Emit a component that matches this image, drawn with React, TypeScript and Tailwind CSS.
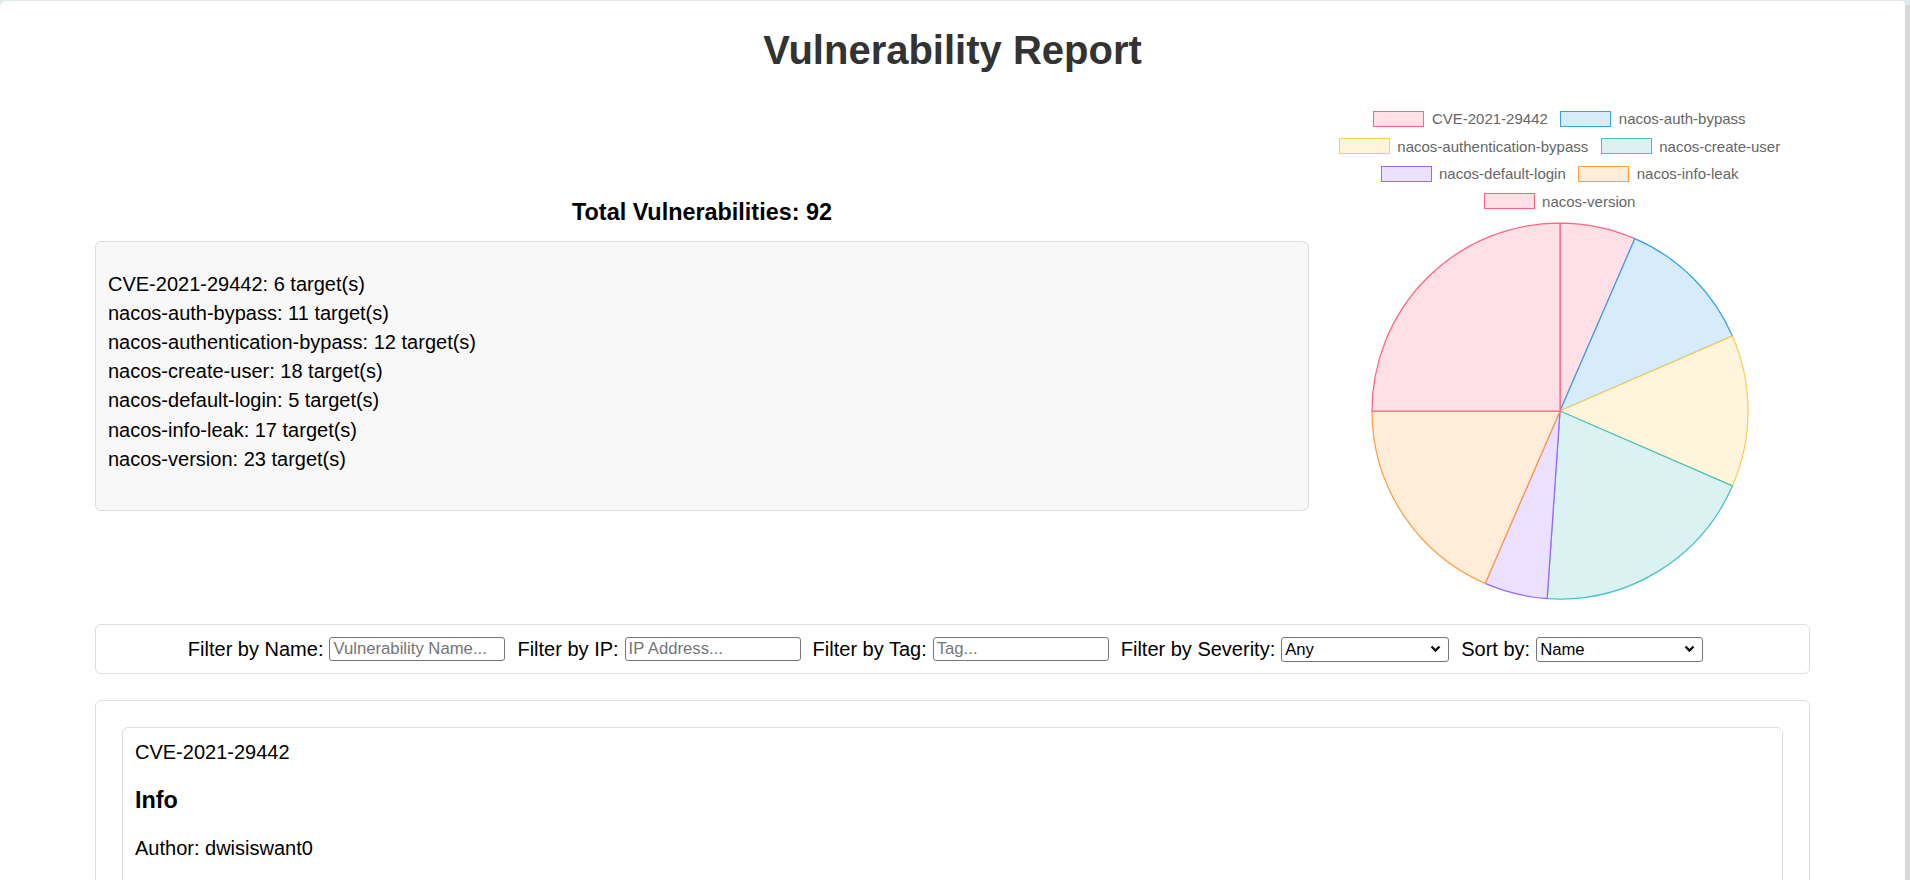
import React from 'react';

const vulns = [
  { name: 'CVE-2021-29442', count: 6, line: '#ff6384', fill: '#ffe0e6', swatch: 'bg-[#ffe0e6] border-[#ff6384]' },
  { name: 'nacos-auth-bypass', count: 11, line: '#36a2eb', fill: '#d7ecfb', swatch: 'bg-[#d7ecfb] border-[#36a2eb]' },
  { name: 'nacos-authentication-bypass', count: 12, line: '#ffce56', fill: '#fff5dd', swatch: 'bg-[#fff5dd] border-[#ffce56]' },
  { name: 'nacos-create-user', count: 18, line: '#4bc0c0', fill: '#dbf2f2', swatch: 'bg-[#dbf2f2] border-[#4bc0c0]' },
  { name: 'nacos-default-login', count: 5, line: '#9966ff', fill: '#ebe0ff', swatch: 'bg-[#ebe0ff] border-[#9966ff]' },
  { name: 'nacos-info-leak', count: 17, line: '#ff9f40', fill: '#ffecd9', swatch: 'bg-[#ffecd9] border-[#ff9f40]' },
  { name: 'nacos-version', count: 23, line: '#ff6384', fill: '#ffe0e6', swatch: 'bg-[#ffe0e6] border-[#ff6384]' },
];

const legendRows = [[0, 1], [2, 3], [4, 5], [6]];

function PieChart() {
  const total = vulns.reduce((s, v) => s + v.count, 0);
  const cx = 190;
  const cy = 190;
  const r = 188;
  let acc = 0;
  const point = (a: number) => {
    const rad = (a / total) * Math.PI * 2;
    return [cx + r * Math.sin(rad), cy - r * Math.cos(rad)];
  };
  return (
    <svg width="380" height="380" viewBox="0 0 380 380">
      {vulns.map((v) => {
        const [x1, y1] = point(acc);
        acc += v.count;
        const [x2, y2] = point(acc);
        const large = v.count / total > 0.5 ? 1 : 0;
        return (
          <path
            key={v.name}
            d={`M${cx} ${cy} L${x1} ${y1} A${r} ${r} 0 ${large} 1 ${x2} ${y2} Z`}
            fill={v.fill}
            stroke={v.line}
            strokeWidth="1.25"
            strokeLinejoin="round"
          />
        );
      })}
    </svg>
  );
}

function Legend() {
  return (
    <div className="flex flex-col">
      {legendRows.map((row, i) => (
        <div key={i} className="h-[27.5px] flex items-center justify-center gap-[12.5px]">
          {row.map((idx) => (
            <div key={idx} className="flex items-center gap-[7.5px]">
              <span className={`w-[51px] h-[16px] border-[1.25px] ${vulns[idx].swatch}`} />
              <span className="text-[15px] text-[#666] leading-none">{vulns[idx].name}</span>
            </div>
          ))}
        </div>
      ))}
    </div>
  );
}

function TextInput({ placeholder }: { placeholder: string }) {
  return (
    <input
      type="text"
      placeholder={placeholder}
      className="w-[176px] h-[24px] border border-[#767676] rounded-[3px] px-[3px] text-[16.7px] bg-white placeholder:text-[#757575] outline-none"
    />
  );
}

function Select({ value, width }: { value: string; width: string }) {
  return (
    <div className={`relative h-[25px] ${width}`}>
      <select className="block appearance-none w-full h-full border border-[#767676] rounded-[3px] pl-[3px] text-[16.7px] leading-[23px] bg-white text-black outline-none">
        <option>{value}</option>
      </select>
      <svg
        className="absolute right-[8px] top-[8px] pointer-events-none"
        width="11"
        height="8"
        viewBox="0 0 11 8"
      >
        <path d="M1.5 1.5l4 4 4-4" stroke="#111" strokeWidth="2.4" fill="none" />
      </svg>
    </div>
  );
}

function FilterGroup({ label, children }: { label: string; children: React.ReactNode }) {
  return (
    <label className="flex items-center gap-[6px] text-[20px] text-black">
      <span>{label}</span>
      {children}
    </label>
  );
}

export default function App() {
  const total = vulns.reduce((s, v) => s + v.count, 0);
  return (
    <div className="h-[880px] overflow-hidden flex bg-[#dfeaed] font-['Liberation_Sans',Arial,sans-serif]">
      <div className="w-[1905px] mt-[1px] bg-white rounded-tl-[6px] rounded-tr-[4px] pt-[26px] px-[95px]">
        <h1 className="text-[40px] leading-[46px] font-bold text-[#333] text-center">Vulnerability Report</h1>

        <div className="mt-[32px] flex items-center">
          <div className="w-[1214px] flex flex-col">
            <h3 className="text-[23.4px] leading-[33px] font-bold text-black text-center mb-[12px]">
              Total Vulnerabilities: {total}
            </h3>
            <div className="h-[270px] bg-[#f8f8f8] border border-[#ddd] rounded-[6px] pl-[12px] pt-[28px]">
              {vulns.map((v) => (
                <div key={v.name} className="text-[20px] leading-[29.2px] text-black">
                  {v.name}: {v.count} target(s)
                </div>
              ))}
            </div>
          </div>
          <div className="flex-1 flex flex-col items-center">
            <Legend />
            <div className="mt-[6px]">
              <PieChart />
            </div>
          </div>
        </div>

        <div className="mt-[23px] h-[50px] border border-[#ddd] rounded-[6px] flex items-center justify-center gap-[12px] pr-[14px]">
          <FilterGroup label="Filter by Name:">
            <TextInput placeholder="Vulnerability Name..." />
          </FilterGroup>
          <FilterGroup label="Filter by IP:">
            <TextInput placeholder="IP Address..." />
          </FilterGroup>
          <FilterGroup label="Filter by Tag:">
            <TextInput placeholder="Tag..." />
          </FilterGroup>
          <FilterGroup label="Filter by Severity:">
            <Select value="Any" width="w-[168px]" />
          </FilterGroup>
          <FilterGroup label="Sort by:">
            <Select value="Name" width="w-[167px]" />
          </FilterGroup>
        </div>

        <div className="mt-[26px] border border-[#ddd] rounded-[6px] p-[26px]">
          <div className="border border-[#ddd] rounded-[6px] px-[12px] pt-[13px] pb-[120px] text-black">
            <div className="text-[20px] leading-[23px]">CVE-2021-29442</div>
            <h3 className="mt-[23px] text-[23.4px] leading-[27px] font-bold">Info</h3>
            <p className="mt-[23px] text-[20px] leading-[23px]">Author: dwisiswant0</p>
          </div>
        </div>
      </div>
      <div className="flex-1 mt-[5px] bg-[#d9d9d9]" />
    </div>
  );
}
